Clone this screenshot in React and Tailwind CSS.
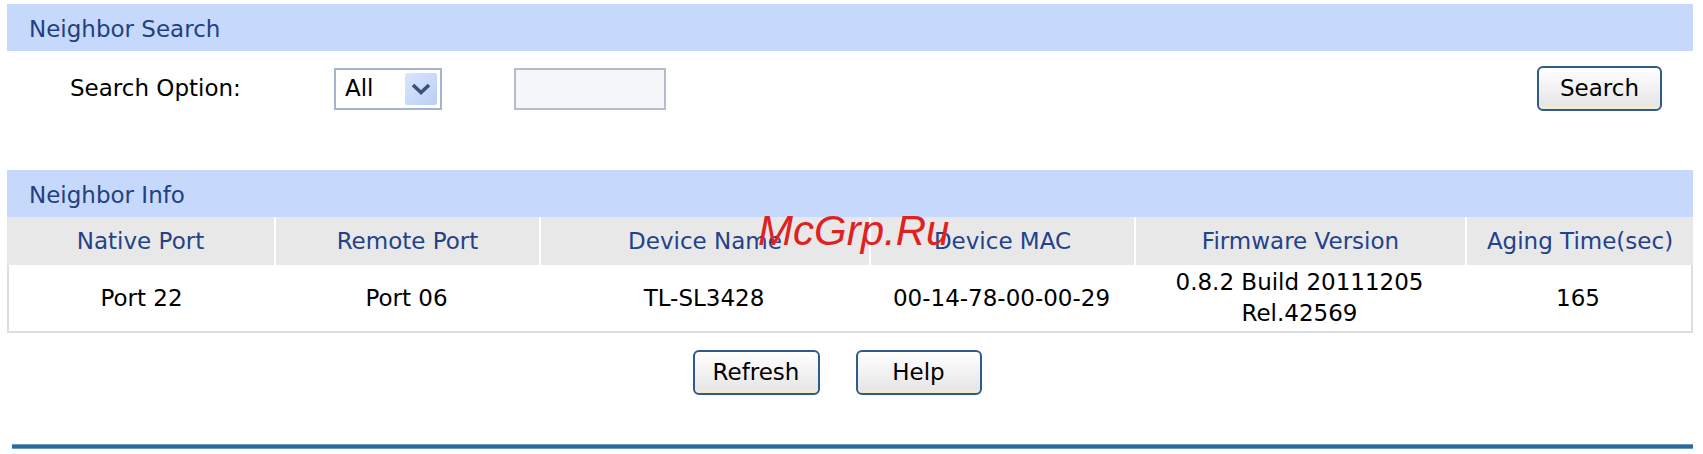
const columns = [
  'Native Port',
  'Remote Port',
  'Device Name',
  'Device MAC',
  'Firmware Version',
  'Aging Time(sec)',
];

const row = ['Port 22', 'Port 06', 'TL-SL3428', '00-14-78-00-00-29', '0.8.2 Build 20111205 Rel.42569', '165'];

function SectionBar({ title }) {
  return (
    <div className="h-[47px] bg-[#c6d9fd] flex items-center pl-[22px] pt-[3px] text-[#24407e]">
      {title}
    </div>
  );
}

function Button({ children, className = '' }) {
  return (
    <button
      className={`h-[45px] rounded-[6px] border-2 border-[#2d5b8b] bg-gradient-to-b from-white to-[#e4e4e4] text-black shadow-[inset_0_-3px_0_#f1ead2] ${className}`}
    >
      {children}
    </button>
  );
}

export default function App() {
  return (
    <div className="relative w-[1703px] h-[454px] bg-white overflow-hidden text-[23px] font-['DejaVu_Sans',sans-serif] leading-none">
      <div className="pt-[4px] pl-[7px] pr-[10px]">
        <SectionBar title="Neighbor Search" />

        <div className="mt-[15px] h-[45px] flex items-center">
          <span className="pl-[63px] w-[327px] text-black">Search Option:</span>
          <div className="w-[108px] h-[42px] border-2 border-[#a3b5d0] bg-white flex items-center justify-between pl-[9px] pr-[3px]">
            <span>All</span>
            <span className="w-[32px] h-[32px] rounded-[2px] bg-gradient-to-br from-[#dbe6fd] to-[#b9cef8] flex items-center justify-center">
              <svg width="22" height="14" viewBox="0 0 22 14">
                <path d="M3 3 L11 10.5 L19 3" fill="none" stroke="#3a5078" strokeWidth="3.6" />
              </svg>
            </span>
          </div>
          <div className="ml-[72px] w-[152px] h-[42px] border-2 border-[#b5bdc9] bg-[#f4f6fa]" />
          <Button className="ml-auto mr-[31px] w-[125px]">Search</Button>
        </div>

        <div className="mt-[59px]">
          <SectionBar title="Neighbor Info" />
        </div>

        <div className="grid grid-cols-[267px_265px_330px_265px_331px_1fr] h-[48px] bg-[#e8e8e8] text-[#23428a]">
          {columns.map((c, i) => (
            <div
              key={c}
              className={`flex items-center justify-center ${i > 0 ? 'border-l-2 border-white' : ''}`}
            >
              {c}
            </div>
          ))}
        </div>

        <div className="grid grid-cols-[265px_265px_330px_265px_331px_1fr] h-[68px] border-2 border-t-0 border-[#dedede] text-black leading-[31px]">
          {row.map((v, i) => (
            <div key={i} className="flex items-center justify-center text-center px-[4px]">
              {i === 4 ? (
                <span>
                  0.8.2 Build 20111205
                  <br />
                  Rel.42569
                </span>
              ) : (
                v
              )}
            </div>
          ))}
        </div>

        <div className="mt-[17px] flex justify-center gap-[36px] pr-[26px]">
          <Button className="w-[127px]">Refresh</Button>
          <Button className="w-[126px]">Help</Button>
        </div>

        <div className="mt-[49px] ml-[5px] h-[5px] bg-[#2d6a9c] border-y border-[#6b98bf]" />
      </div>

      <div className="absolute left-[758px] top-[210px] text-[42px] italic text-[#e0211f] font-['Liberation_Sans',sans-serif] leading-none">
        McGrp.Ru
      </div>
    </div>
  );
}
